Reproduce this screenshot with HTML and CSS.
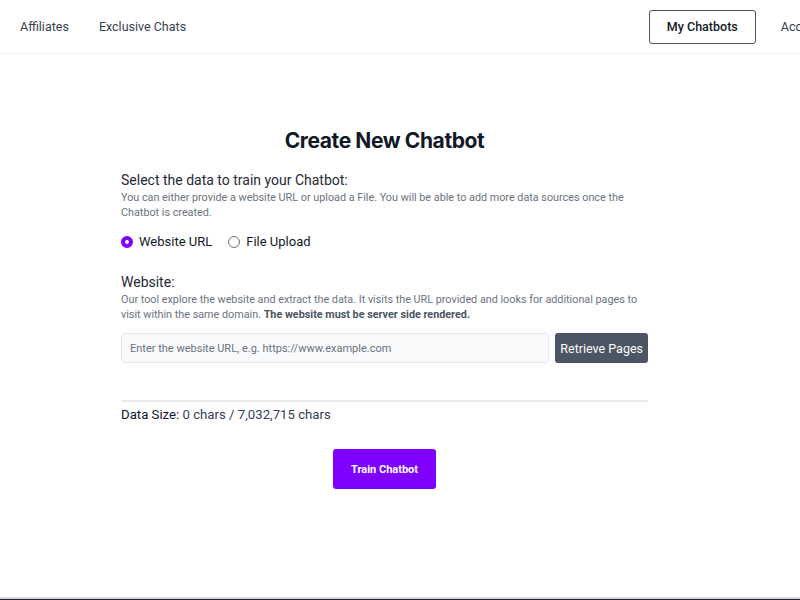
FILE: index.html
```html
<!DOCTYPE html>
<html lang="en">
<head>
    <meta charset="UTF-8">
    <meta name="viewport" content="width=device-width, initial-scale=1.0">
    <title>Create New Chatbot</title>
    <link rel="stylesheet" href="styles.css">
</head>
<body>
    <header class="topbar">
        <nav class="nav-left">
            <a href="#" class="nav-link">Affiliates</a>
            <a href="#" class="nav-link">Exclusive Chats</a>
        </nav>
        <nav class="nav-right">
            <a href="#" class="nav-button">My Chatbots</a>
            <a href="#" class="nav-link">Account</a>
        </nav>
    </header>

    <main class="page">
        <div class="container">
            <h1 class="title">Create New Chatbot</h1>

            <section class="block">
                <h3 class="block-title">Select the data to train your Chatbot:</h3>
                <p class="hint">You can either provide a website URL or upload a File. You will be able to add more data sources once the Chatbot is created.</p>

                <div class="radios">
                    <label class="radio"><input type="radio" name="source" value="url" checked> Website URL</label>
                    <label class="radio"><input type="radio" name="source" value="file"> File Upload</label>
                </div>
            </section>

            <section class="block">
                <h3 class="block-title">Website:</h3>
                <p class="hint">Our tool explore the website and extract the data. It visits the URL provided and looks for additional pages to visit within the same domain. <strong>The website must be server side rendered.</strong></p>

                <div class="url-row">
                    <input type="text" class="url-input" placeholder="Enter the website URL, e.g. https://www.example.com">
                    <button class="btn-dark">Retrieve Pages</button>
                </div>
            </section>

            <hr class="divider">

            <p class="data-size"><span class="label">Data Size:</span> 0 chars / 7,032,715 chars</p>

            <div class="actions">
                <button class="btn-primary">Train Chatbot</button>
            </div>
        </div>
    </main>

    <footer class="footer"></footer>
</body>
</html>
```

FILE: styles.css
```css
body {
    font-family: Roboto, "Liberation Sans", Arial, sans-serif;
    margin: 0;
    color: #111827;
    background-color: #ffffff;
}
.topbar {
    height: 53px;
    display: flex;
    justify-content: space-between;
    align-items: center;
    border-bottom: 1px solid #f0f0f2;
    padding-left: 20px;
    overflow: hidden;
    white-space: nowrap;
}
.nav-left, .nav-right {
    display: flex;
    align-items: center;
}
.nav-left {
    gap: 30px;
}
.nav-right {
    gap: 25px;
    margin-right: -27px;
}
.nav-link {
    font-size: 12.5px;
    color: #374151;
    text-decoration: none;
}
.nav-button {
    font-size: 12.5px;
    font-weight: 500;
    color: #111827;
    text-decoration: none;
    border: 1px solid #4b5563;
    border-radius: 3px;
    padding: 0 17px;
    height: 32px;
    line-height: 32px;
}
.page {
    min-height: 543px;
    padding-right: 31px;
}
.container {
    width: 527px;
    margin: 0 auto;
    padding-top: 74px;
}
.title {
    font-family: Inter, Roboto, sans-serif;
    font-size: 21px;
    font-weight: 700;
    letter-spacing: -0.4px;
    text-align: center;
    margin: 0 0 19px;
}
.block-title {
    font-size: 14px;
    font-weight: 400;
    margin: 0;
    color: #1f2937;
}
.hint {
    font-size: 10.8px;
    line-height: 15px;
    color: #6b7280;
    margin: 2px 0 0;
}
.hint strong {
    color: #4b5563;
}
.radios {
    display: flex;
    gap: 16px;
    margin: 14px 0 25px;
}
.radio {
    font-size: 13px;
    display: flex;
    align-items: center;
    gap: 6px;
    color: #111827;
}
.radio input {
    appearance: none;
    width: 12px;
    height: 12px;
    margin: 0;
    border: 1px solid #6b7280;
    border-radius: 50%;
}
.radio input:checked {
    border: 4px solid #7f00ff;
    background-color: #ffffff;
}
.url-row {
    display: flex;
    gap: 6px;
    margin-top: 11px;
}
.url-input {
    flex: 1;
    height: 30px;
    box-sizing: border-box;
    padding: 0 8px;
    font-family: inherit;
    font-size: 11px;
    background-color: #f9fafb;
    border: 1px solid #e5e7eb;
    border-radius: 4px;
}
.url-input::placeholder {
    color: #6b7280;
}
.btn-dark {
    font-family: inherit;
    font-size: 12.5px;
    color: #ffffff;
    background-color: #4b5563;
    border: none;
    border-radius: 3px;
    height: 30px;
    padding: 0 5px;
}
.divider {
    border: none;
    border-top: 2px solid #e9eaee;
    margin: 37px 0 0;
}
.data-size {
    font-size: 13.2px;
    color: #374151;
    margin: 5px 0 0;
}
.data-size .label {
    color: #111827;
}
.actions {
    display: flex;
    justify-content: center;
    margin-top: 27px;
}
.btn-primary {
    font-family: inherit;
    font-size: 11px;
    font-weight: 700;
    color: #ffffff;
    background-color: #7f00ff;
    border: none;
    border-radius: 3px;
    width: 103px;
    height: 40px;
}
.footer {
    height: 40px;
    border-top: 2px solid #d8d9df;
    background-color: #1f2430;
}
```
